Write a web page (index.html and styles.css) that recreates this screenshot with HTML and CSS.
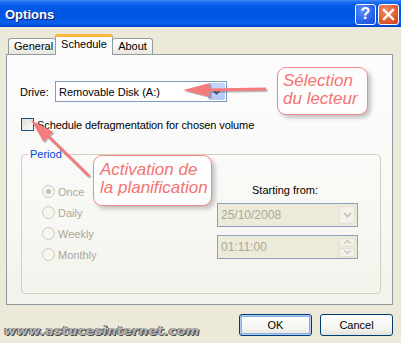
FILE: index.html
```html
<!DOCTYPE html>
<html>
<head>
<meta charset="utf-8">
<link rel="stylesheet" href="styles.css">
</head>
<body>
<div class="window">
  <div class="titlebar">
    <span class="title">Options</span>
    <div class="tb-buttons">
      <span class="tb-btn help">?</span>
      <span class="tb-btn close">
        <svg width="13" height="13" viewBox="0 0 13 13"><path d="M2 2 L11 11 M11 2 L2 11" stroke="#fff" stroke-width="2.4" stroke-linecap="square"/></svg>
      </span>
    </div>
  </div>

  <div class="content">
    <div class="tabs">
      <div class="tab">General</div>
      <div class="tab active">Schedule</div>
      <div class="tab">About</div>
    </div>
    <div class="panel">
      <div class="drive-row">
        <span class="drive-label">Drive:</span>
        <div class="combo">
          <span class="combo-text">Removable Disk (A:)</span>
          <span class="combo-btn">
            <svg width="9" height="6" viewBox="0 0 9 6"><path d="M1 1 L4.5 4.5 L8 1" fill="none" stroke="#4d6185" stroke-width="2"/></svg>
          </span>
        </div>
      </div>
      <div class="check-row">
        <span class="checkbox"></span>
        <span>Schedule defragmentation for chosen volume</span>
      </div>
      <fieldset class="group">
        <legend>Period</legend>
        <div class="group-body">
          <div class="radios">
            <div class="radio-row"><span class="radio checked"></span>Once</div>
            <div class="radio-row"><span class="radio"></span>Daily</div>
            <div class="radio-row"><span class="radio"></span>Weekly</div>
            <div class="radio-row"><span class="radio"></span>Monthly</div>
          </div>
          <div class="start">
            <div class="start-label">Starting from:</div>
            <div class="field">
              <span class="field-text">25/10/2008</span>
              <span class="field-btn">
                <svg width="9" height="6" viewBox="0 0 9 6"><path d="M1 1 L4.5 4.5 L8 1" fill="none" stroke="#c9c7ba" stroke-width="2"/></svg>
              </span>
            </div>
            <div class="field">
              <span class="field-text">01:11:00</span>
              <span class="spin">
                <span class="spin-btn"><svg width="7" height="4" viewBox="0 0 7 4"><path d="M0.5 3.5 L3.5 0.5 L6.5 3.5" fill="none" stroke="#c9c7ba" stroke-width="1.5"/></svg></span>
                <span class="spin-btn"><svg width="7" height="4" viewBox="0 0 7 4"><path d="M0.5 0.5 L3.5 3.5 L6.5 0.5" fill="none" stroke="#c9c7ba" stroke-width="1.5"/></svg></span>
              </span>
            </div>
          </div>
        </div>
      </fieldset>
    </div>

    <div class="footer">
      <span class="watermark">www.astucesinternet.com</span>
      <div class="buttons">
        <span class="btn default">OK</span>
        <span class="btn">Cancel</span>
      </div>
    </div>
  </div>

  <svg class="arrows" width="401" height="343" viewBox="0 0 401 343">
    <g opacity="0.25" transform="translate(1.5,1.5)">
      <line x1="266" y1="89" x2="205" y2="90" stroke="#000" stroke-width="3"/>
      <polygon points="183,90 210,83 210,97" fill="#000"/>
      <line x1="89" y1="176" x2="45" y2="133" stroke="#000" stroke-width="3"/>
      <polygon points="31,120 43.4,141.7 53.2,131.7" fill="#000"/>
    </g>
    <line x1="266" y1="89" x2="205" y2="90" stroke="#f47c7c" stroke-width="3"/>
    <polygon points="183,90 210,83 210,97" fill="#f47c7c"/>
    <line x1="89" y1="176" x2="45" y2="133" stroke="#f47c7c" stroke-width="3"/>
    <polygon points="31,120 43.4,141.7 53.2,131.7" fill="#f47c7c"/>
  </svg>

  <div class="callout callout-drive">Sélection<br>du lecteur</div>
  <div class="callout callout-plan">Activation de<br>la planification</div>
</div>
</body>
</html>
```

FILE: styles.css
```css
html, body {
  margin: 0;
  padding: 0;
}
body {
  width: 401px;
  height: 343px;
  overflow: hidden;
  background: #ece9d8;
  font-family: "Liberation Sans", Arial, sans-serif;
  font-size: 11px;
  color: #000;
}
.window {
  position: relative;
  width: 401px;
  height: 343px;
}
.titlebar {
  height: 27px;
  display: flex;
  align-items: center;
  justify-content: space-between;
  padding: 0 2px 0 5px;
  box-sizing: border-box;
  background: linear-gradient(#3d8ef9 0px, #1c6ef2 2px, #0a5fea 5px, #0056e5 9px, #0054e3 16px, #0a5fe9 23px, #0049d8 26px, #003fc6 27px);
}
.title {
  color: #fff;
  font-weight: bold;
  font-size: 13px;
  text-shadow: 1px 1px 0 #0a1f7a;
  margin-top: 1px;
}
.tb-buttons {
  display: flex;
  gap: 2px;
  margin-top: 1px;
}
.tb-btn {
  width: 19px;
  height: 19px;
  border: 1px solid #fff;
  border-radius: 3px;
  display: flex;
  align-items: center;
  justify-content: center;
  color: #fff;
  font-weight: bold;
  font-size: 16px;
}
.help {
  background: radial-gradient(circle at 35% 30%, #5d8ff9, #2a62ea 60%, #1a4fd8);
}
.close {
  background: radial-gradient(circle at 35% 30%, #f08c6c, #e05a2e 60%, #c8431d);
}
.content {
  padding: 0 8px 0 6px;
}
.tabs {
  display: flex;
  align-items: flex-end;
  padding-left: 2px;
  margin-top: 7px;
  height: 20px;
  position: relative;
  z-index: 1;
}
.tab {
  box-sizing: border-box;
  height: 16px;
  border: 1px solid #919b9c;
  border-bottom: none;
  border-radius: 3px 3px 0 0;
  background: linear-gradient(#ffffff, #f3f2ed 60%, #e8e6dd);
  padding: 1px 5px 0 5px;
  line-height: 13px;
  text-align: center;
}
.tab:first-child {
  width: 47px;
  border-right: none;
}
.tab:last-child {
  width: 40px;
  border-left: none;
}
.tab.active {
  width: 58px;
  height: 21px;
  margin-bottom: -1px;
  background: #fcfcfe;
  border-top: 3px solid #f9b83a;
  border-left: 1px solid #919b9c;
  border-right: 1px solid #919b9c;
  padding-top: 1px;
}
.panel {
  box-sizing: border-box;
  height: 251px;
  border: 1px solid #919b9c;
  background: linear-gradient(#fcfcfe, #f8f8f5 60%, #f3f2ec);
  padding: 26px 11px 0 0;
}
.drive-row {
  display: flex;
  align-items: center;
  padding-left: 13px;
}
.drive-label {
  width: 35px;
}
.combo {
  box-sizing: border-box;
  width: 172px;
  height: 21px;
  border: 1px solid #7f9db9;
  background: #fff;
  display: flex;
  align-items: center;
  justify-content: space-between;
  padding: 1px;
}
.combo-text {
  padding-left: 2px;
}
.combo-btn {
  box-sizing: border-box;
  width: 17px;
  height: 17px;
  border: 1px solid #b9cef9;
  border-radius: 2px;
  background: linear-gradient(#c6d8fc, #b3c8f5);
  display: flex;
  align-items: center;
  justify-content: center;
}
.check-row {
  display: flex;
  align-items: center;
  gap: 3px;
  padding-left: 14px;
  margin-top: 16px;
  letter-spacing: -0.1px;
}
.checkbox {
  box-sizing: border-box;
  width: 13px;
  height: 13px;
  border: 1px solid #1c5180;
  background: linear-gradient(135deg, #dcdcd7, #fbfbf9);
}
.group {
  box-sizing: border-box;
  margin: 17px 0 0 14px;
  padding: 0;
  height: 146px;
  border: 1px solid #d0d0bf;
  border-radius: 4px;
}
.group legend {
  color: #0046d5;
  margin-left: 6px;
  padding: 0 2px;
  line-height: 13px;
}
.group-body {
  display: flex;
  padding: 20px 0 0 20px;
}
.radios {
  width: 175px;
  display: flex;
  flex-direction: column;
  color: #aca899;
}
.radio-row {
  height: 21px;
  display: flex;
  align-items: center;
  gap: 3px;
}
.radio {
  box-sizing: border-box;
  width: 13px;
  height: 13px;
  border: 1px solid #cac8bb;
  border-radius: 50%;
  background: #f7f6f0;
  display: flex;
  align-items: center;
  justify-content: center;
}
.radio.checked::after {
  content: "";
  width: 5px;
  height: 5px;
  border-radius: 50%;
  background: #c2bfb0;
}
.start {
  display: flex;
  flex-direction: column;
}
.start-label {
  padding-left: 35px;
  line-height: 13px;
  margin-top: 3px;
  margin-bottom: 6px;
}
.field {
  box-sizing: border-box;
  width: 141px;
  height: 24px;
  border: 1px solid #8aa0bf;
  background: #ecead9;
  display: flex;
  align-items: center;
  justify-content: space-between;
  padding: 2px;
  color: #aca899;
  margin-bottom: 8px;
  font-size: 12px;
}
.field-text {
  padding-left: 1px;
}
.field-btn {
  box-sizing: border-box;
  width: 16px;
  height: 18px;
  border: 1px solid #e2e0d5;
  border-radius: 2px;
  background: #f3f2ea;
  display: flex;
  align-items: center;
  justify-content: center;
}
.spin {
  display: flex;
  flex-direction: column;
  gap: 1px;
}
.spin-btn {
  box-sizing: border-box;
  width: 16px;
  height: 9px;
  border: 1px solid #e2e0d5;
  border-radius: 2px;
  background: #f3f2ea;
  display: flex;
  align-items: center;
  justify-content: center;
}
.footer {
  display: flex;
  justify-content: space-between;
  align-items: flex-start;
  padding-top: 9px;
}
.watermark {
  font-family: "DejaVu Sans", sans-serif;
  font-weight: bold;
  font-style: italic;
  font-size: 13px;
  color: #b4b4b4;
  text-shadow: 1px 1px 0 #4a4a4a, -1px 0 0 #6a6a6a;
  margin-top: 9px;
  margin-left: -2px;
  letter-spacing: 0.2px;
}
.buttons {
  display: flex;
  gap: 8px;
}
.btn {
  box-sizing: border-box;
  width: 73px;
  height: 22px;
  border: 1px solid #003c74;
  border-radius: 3px;
  background: linear-gradient(#ffffff, #f4f4f0 70%, #e3e2da);
  display: flex;
  align-items: center;
  justify-content: center;
}
.btn.default {
  box-shadow: inset 0 0 0 1px #aecbf5, inset 0 0 0 2px #89aee7;
}
.arrows {
  position: absolute;
  left: 0;
  top: 0;
  pointer-events: none;
}
.callout {
  position: absolute;
  box-sizing: border-box;
  border: 1px solid #f28a8a;
  border-radius: 9px;
  background: #fdfdfd;
  box-shadow: 3px 3px 4px rgba(0, 0, 0, 0.22);
  color: #f47373;
  font-family: "Liberation Sans", Arial, sans-serif;
  font-style: italic;
  font-size: 17px;
  line-height: 18px;
}
.callout-drive {
  left: 277px;
  top: 67px;
  width: 91px;
  height: 48px;
  padding: 4px 0 0 5px;
}
.callout-plan {
  left: 93px;
  top: 155px;
  width: 119px;
  height: 51px;
  padding: 5px 0 0 6px;
}
```
